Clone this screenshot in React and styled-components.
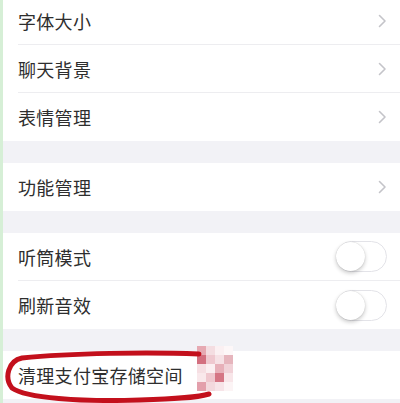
import React from "react";
import styled, { createGlobalStyle } from "styled-components";

const Global = createGlobalStyle`
  html, body { margin: 0; padding: 0; background: #f2f2f6; }
  body { font-family: "Noto Sans CJK SC", "Noto Sans", sans-serif; overflow: hidden; }
`;

const Page = styled.div`
  position: relative;
  width: 400px;
  height: 403px;
  display: flex;
  overflow: hidden;
  background: #f2f2f6;
`;

const Strip = styled.div`
  width: 3px;
  flex: none;
  background: #d6efd6;
`;

const List = styled.div`
  flex: 1;
  display: flex;
  flex-direction: column;
  gap: 22px;
  margin-top: -3px;
`;

const Group = styled.div`
  background: #ffffff;
  display: flex;
  flex-direction: column;
`;

const Row = styled.div`
  height: 48px;
  padding-left: 15px;
  display: flex;
  box-sizing: border-box;
`;

const Inner = styled.div`
  flex: 1;
  display: flex;
  align-items: center;
  justify-content: space-between;
  padding-right: 13px;
  border-bottom: ${(p) => (p.$last ? "none" : "1px solid #ededf0")};
`;

const Label = styled.span`
  font-size: 18px;
  color: #2e2e2e;
  letter-spacing: 0.3px;
`;

const Toggle = styled.div`
  width: 51px;
  height: 31px;
  box-sizing: border-box;
  border: 1.5px solid #e3e3e8;
  border-radius: 16px;
  background: #ffffff;
  display: flex;
  align-items: center;
`;

const Knob = styled.div`
  width: 29px;
  height: 29px;
  border-radius: 50%;
  background: #ffffff;
  box-shadow: 0 2px 4px rgba(0, 0, 0, 0.22), 0 0 1px rgba(0, 0, 0, 0.2);
  margin-left: -1px;
`;

const Overlay = styled.svg`
  position: absolute;
  left: 0;
  top: 0;
  pointer-events: none;
`;

const Chevron = () => (
  <svg width="9" height="14" viewBox="0 0 9 14">
    <path d="M1.5 1.5 L7 7 L1.5 12.5" fill="none" stroke="#c4c4c9" strokeWidth="1.6" strokeLinecap="round" strokeLinejoin="round" />
  </svg>
);

const groups = [
  [
    { label: "字体大小", type: "chev" },
    { label: "聊天背景", type: "chev" },
    { label: "表情管理", type: "chev" },
  ],
  [{ label: "功能管理", type: "chev" }],
  [
    { label: "听筒模式", type: "toggle" },
    { label: "刷新音效", type: "toggle" },
  ],
  [{ label: "清理支付宝存储空间", type: "none" }],
];

const mosaic = [
  [197, 346, "#e6a9b2"], [206, 346, "#f4dde1"], [215, 346, "#fbf0f2"], [224, 346, "#fdf7f8"],
  [197, 355, "#d36f7f"], [206, 355, "#efc8cf"], [215, 355, "#f6e1e5"], [224, 355, "#e6b5bd"],
  [197, 364, "#f6dfe3"], [206, 364, "#fbefF1"], [215, 364, "#e7b0b9"], [224, 364, "#f1d2d8"],
  [197, 373, "#f9e8eb"], [206, 373, "#efc7ce"], [215, 373, "#d57584"], [224, 373, "#f8e6e9"],
  [197, 382, "#e39fab"], [206, 382, "#f3d8dd"], [215, 382, "#f7e4e8"], [224, 382, "#fcf4f5"],
];

export default function App() {
  return (
    <>
      <Global />
      <Page>
        <Strip />
        <List>
          {groups.map((g, gi) => (
            <Group key={gi}>
              {g.map((r, ri) => (
                <Row key={r.label}>
                  <Inner $last={ri === g.length - 1}>
                    <Label>{r.label}</Label>
                    {r.type === "chev" && <Chevron />}
                    {r.type === "toggle" && (
                      <Toggle>
                        <Knob />
                      </Toggle>
                    )}
                  </Inner>
                </Row>
              ))}
            </Group>
          ))}
        </List>
        <Overlay width="400" height="403" viewBox="0 0 400 403">
          {mosaic.map(([x, y, c], i) => (
            <rect key={i} x={x} y={y} width="9" height="9" fill={c} />
          ))}
          <path
            d="M199 354 C150 352, 70 353, 22 358 C8 361, 4 378, 12 388 C26 398, 80 402, 140 400 C172 399, 196 398, 209 394"
            fill="none"
            stroke="#c3101c"
            strokeWidth="5"
            strokeLinecap="round"
          />
        </Overlay>
      </Page>
    </>
  );
}
